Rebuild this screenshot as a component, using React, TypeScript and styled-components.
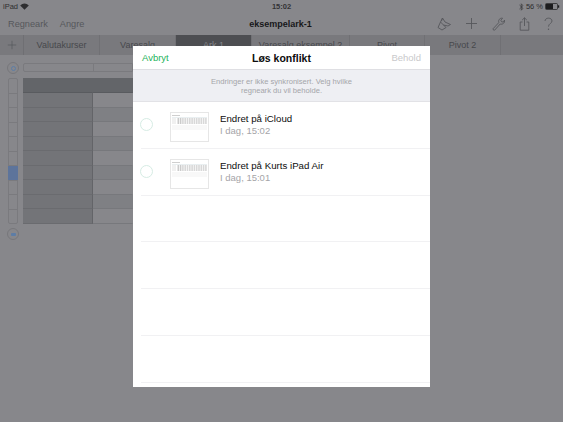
import React from "react";
import styled, { createGlobalStyle } from "styled-components";

const Global = createGlobalStyle`
  html, body { margin: 0; padding: 0; background: #87878b; }
  body { font-family: "Liberation Sans", Arial, sans-serif; }
`;

const Page = styled.div`
  position: relative;
  width: 563px;
  height: 422px;
  overflow: hidden;
  background: #87878b;
`;

const StatusBar = styled.div`
  height: 13px;
  padding: 0 3px;
  display: grid;
  grid-template-columns: 1fr auto 1fr;
  align-items: center;
  font-size: 7.5px;
  color: #2e2e30;
`;
const StatusSide = styled.div<{ $end?: boolean }>`
  display: flex;
  align-items: center;
  gap: 2px;
  justify-content: ${(p) => (p.$end ? "flex-end" : "flex-start")};
`;
const Clock = styled.span`
  font-weight: 700;
  color: #333336;
`;
const Toolbar = styled.div`
  height: 22px;
  padding: 0 10px 0 8px;
  display: grid;
  grid-template-columns: 1fr auto 1fr;
  align-items: center;
`;
const ToolLeft = styled.div`
  display: flex;
  gap: 12px;
`;
const ToolLabel = styled.span`
  font-size: 9.2px;
  color: #56575b;
`;
const DocTitle = styled.span`
  font-size: 9px;
  font-weight: 700;
  color: #17171a;
`;
const ToolIcons = styled.div`
  display: flex;
  justify-content: flex-end;
  gap: 14px;
`;
const TabBar = styled.div`
  height: 20px;
  display: flex;
  background: #79797d;
`;
const AddTab = styled.div`
  width: 24px;
  flex: none;
  display: flex;
  align-items: center;
  justify-content: center;
  border-right: 1px solid #6f6f73;
  box-sizing: border-box;
`;
const Tab = styled.div<{ $w: number; $active?: boolean }>`
  width: ${(p) => p.$w}px;
  flex: none;
  box-sizing: border-box;
  border-right: 1px solid #707074;
  display: flex;
  align-items: center;
  justify-content: center;
  font-size: 9px;
  color: ${(p) => (p.$active ? "#85868a" : "#47484c")};
  background: ${(p) => (p.$active ? "#4d4e52" : "transparent")};
`;

const Sheet = styled.div`
  padding: 7px 0 0 7px;
  display: grid;
  grid-template-columns: 12px 110px;
  column-gap: 4px;
  row-gap: 4px;
`;
const Knob = styled.div`
  width: 12px;
  height: 12px;
  border-radius: 50%;
  border: 1px solid #77777b;
  box-sizing: border-box;
  display: flex;
  align-items: center;
  justify-content: center;
`;
const KnobDot = styled.div<{ $square?: boolean }>`
  width: 5px;
  height: ${(p) => (p.$square ? 3 : 5)}px;
  box-sizing: border-box;
  border-radius: ${(p) => (p.$square ? "1px" : "50%")};
  background: ${(p) => (p.$square ? "#5d7da6" : "transparent")};
  border: ${(p) => (p.$square ? "none" : "1.5px solid #5d7da6")};
`;
const ColHeader = styled.div`
  height: 9px;
  margin-top: 1px;
  box-sizing: border-box;
  border: 1px solid #7a7a7e;
  border-radius: 2px 0 0 2px;
  display: grid;
  grid-template-columns: 70px 1fr;
`;
const ColCell = styled.div`
  border-right: 1px solid #7a7a7e;
`;
const RowRail = styled.div`
  width: 10px;
  margin-left: 1px;
  display: flex;
  flex-direction: column;
  border: 1px solid #7a7a7e;
  border-radius: 2px;
  box-sizing: border-box;
  height: 146px;
`;
const RailCell = styled.div<{ $sel?: boolean }>`
  flex: 1;
  margin: 0 -1px;
  border-bottom: 1px solid #7a7a7e;
  background: ${(p) => (p.$sel ? "#5d749b" : "transparent")};
  &:last-child { border-bottom: none; }
`;
const Grid = styled.div`
  height: 146px;
  display: grid;
  grid-template-columns: 70px 40px;
  grid-template-rows: 15px repeat(9, 1fr);
`;
const Cell = styled.div<{ $kind: "head" | "first" | "a" | "b" }>`
  box-sizing: border-box;
  border-bottom: 1px solid ${(p) => (p.$kind === "head" ? "#595b5f" : p.$kind === "first" ? "#6a6b6f" : "#77787c")};
  border-right: 1px solid ${(p) => (p.$kind === "first" ? "#636468" : "transparent")};
  background: ${(p) =>
    p.$kind === "head" ? "#636569" : p.$kind === "first" ? "#737478" : p.$kind === "a" ? "#87878b" : "#7f8084"};
`;
const BottomKnobRow = styled.div`
  grid-column: 1;
`;

const Modal = styled.div`
  position: absolute;
  left: 133px;
  top: 46px;
  width: 297px;
  height: 341px;
  background: #fff;
  display: flex;
  flex-direction: column;
`;
const ModalHead = styled.div`
  height: 24px;
  flex: none;
  padding: 0 9px;
  display: grid;
  grid-template-columns: 1fr auto 1fr;
  align-items: center;
  border-bottom: 1px solid #dfdfe3;
  box-sizing: border-box;
`;
const Cancel = styled.span`
  font-size: 9.5px;
  color: #1fb45c;
`;
const ModalTitle = styled.span`
  font-size: 10.5px;
  font-weight: 700;
  color: #0c0c0c;
`;
const Keep = styled.span`
  font-size: 9.5px;
  color: #c9c9cb;
  text-align: right;
`;
const Info = styled.div`
  height: 32px;
  flex: none;
  box-sizing: border-box;
  background: #eeeff3;
  border-bottom: 1px solid #e2e2e6;
  display: flex;
  align-items: center;
  justify-content: center;
  text-align: center;
  font-size: 7.6px;
  line-height: 9px;
  color: #a4a5a9;
`;
const List = styled.div`
  padding-left: 8px;
  display: flex;
  flex-direction: column;
`;
const Row = styled.div`
  height: 46.8px;
  box-sizing: border-box;
  flex: none;
  padding-bottom: 1px;
  border-bottom: 1px solid #f1f1f3;
  display: flex;
  align-items: center;
`;
const Radio = styled.div`
  width: 13px;
  height: 13px;
  margin-left: -1px;
  flex: none;
  box-sizing: border-box;
  border-radius: 50%;
  border: 1px solid #d6ece4;
`;
const Thumb = styled.svg`
  margin: 5px 0 0 17px;
  flex: none;
  display: block;
`;
const RowText = styled.div`
  margin-left: 11px;
  display: flex;
  flex-direction: column;
  gap: 0;
`;
const RowTitle = styled.span`
  font-size: 9.7px;
  line-height: 12px;
  color: #0d0d0d;
`;
const RowSub = styled.span`
  font-size: 9.5px;
  line-height: 11px;
  color: #a5a5a8;
`;

const ic = { fill: "none", stroke: "#56575b", strokeWidth: 0.9 };

const Wifi = () => (
  <svg width="9" height="7" viewBox="0 0 9 7">
    <path d="M4.5 6.8 L0.2 2.4 A6 6 0 0 1 8.8 2.4Z" fill="#2e2e30" />
  </svg>
);
const Bluetooth = () => (
  <svg width="5" height="8" viewBox="0 0 5 8">
    <path d="M0.5 2 L4 5.4 L2.3 7.2 V0.8 L4 2.6 L0.5 6" fill="none" stroke="#38383b" strokeWidth="0.7" />
  </svg>
);
const Battery = () => (
  <svg width="15" height="7" viewBox="0 0 15 7">
    <rect x="0.5" y="0.5" width="12" height="6" rx="1" fill="none" stroke="#1c1c1e" strokeWidth="0.7" />
    <rect x="1" y="1" width="7" height="5" fill="#1c1c1e" />
    <rect x="13" y="2.3" width="1.2" height="2.4" fill="#1c1c1e" />
  </svg>
);
const PlusIcon = ({ size = 13 }: { size?: number }) => (
  <svg width={size} height={size} viewBox="0 0 13 13">
    <path d="M6.5 1V12M1 6.5H12" {...ic} />
  </svg>
);
const Brush = () => (
  <svg width="14" height="14" viewBox="0 0 14 14">
    <path d="M5.5 1 L8 5 L13.5 7.5 L11 9 L6.5 8 L9 10.5 L5 13 L1 10.5 L3.5 5 Z" {...ic} />
    <path d="M3.5 5 L6.5 8 M5.5 1 L4.5 4" {...ic} />
  </svg>
);
const Wrench = () => (
  <svg width="13" height="14" viewBox="0 0 13 14">
    <path d="M1 11.8 L6.8 5.6 C6 3 7.8 0.8 10.6 1.2 L8.8 3.2 L9.6 4.8 L11.4 5 L12.6 3 C13 6 10.6 7.8 8.2 7 L2.6 13.2 Q1 13.4 1 11.8Z" {...ic} />
  </svg>
);
const Share = () => (
  <svg width="11" height="14" viewBox="0 0 11 14">
    <path d="M3.5 5H1.2V13.2H9.8V5H7.5M5.5 9V0.8M3.2 3L5.5 0.8L7.8 3" {...ic} />
  </svg>
);
const Help = () => (
  <svg width="9" height="14" viewBox="0 0 9 14">
    <path d="M1 4 C1 0.2 8 0.2 8 4 C8 6.5 4.5 6.5 4.5 9.6" {...ic} />
    <circle cx="4.5" cy="12.3" r="0.7" fill="#56575b" />
  </svg>
);

const Thumbnail = () => (
  <Thumb width="39" height="30" viewBox="0 0 39 30">
    <rect x="0.5" y="0.5" width="38" height="29" fill="#fff" stroke="#e6e6e6" />
    <rect x="2" y="3" width="8" height="1" fill="#cfcfcf" />
    <rect x="2" y="5" width="35" height="0.8" fill="#e4ecee" />
    {[0, 1, 2, 3, 4, 5, 6, 7, 8, 9, 10, 11, 12].map((i) => (
      <rect key={i} x={7.5 + i * 2.3} y="6" width="1.6" height="6" fill={i < 2 ? "#cbcbcb" : "#d8d8d8"} />
    ))}
    <rect x="2" y="6" width="4" height="6" fill="#f0f0f0" />
    <rect x="2" y="13" width="35" height="5" fill="#f8f8f8" />
  </Thumb>
);

const tabs = [
  { t: "Valutakurser", w: 76 },
  { t: "Varesalg", w: 76 },
  { t: "Ark 1", w: 76, active: true },
  { t: "Varesalg eksempel 2", w: 98 },
  { t: "Pivot", w: 75 },
  { t: "Pivot 2", w: 76 },
];
const rows = [0, 1, 2, 3, 4, 5, 6, 7, 8];

export default function App() {
  return (
    <Page>
      <Global />
      <StatusBar>
        <StatusSide>
          iPad <Wifi />
        </StatusSide>
        <Clock>15:02</Clock>
        <StatusSide $end>
          <Bluetooth />
          <span>56 %</span>
          <Battery />
        </StatusSide>
      </StatusBar>
      <Toolbar>
        <ToolLeft>
          <ToolLabel>Regneark</ToolLabel>
          <ToolLabel>Angre</ToolLabel>
        </ToolLeft>
        <DocTitle>eksempelark-1</DocTitle>
        <ToolIcons>
          <Brush />
          <PlusIcon />
          <Wrench />
          <Share />
          <Help />
        </ToolIcons>
      </Toolbar>
      <TabBar>
        <AddTab>
          <PlusIcon size={10} />
        </AddTab>
        {tabs.map((x) => (
          <Tab key={x.t} $w={x.w} $active={x.active}>
            {x.t}
          </Tab>
        ))}
      </TabBar>
      <Sheet>
        <Knob>
          <KnobDot />
        </Knob>
        <ColHeader>
          <ColCell />
        </ColHeader>
        <RowRail>
          {[0, 1, 2, 3, 4, 5, 6, 7, 8, 9].map((i) => (
            <RailCell key={i} $sel={i === 6} />
          ))}
        </RowRail>
        <Grid>
          <Cell $kind="head" />
          <Cell $kind="head" />
          {rows.map((i) => (
            <React.Fragment key={i}>
              <Cell $kind="first" />
              <Cell $kind={i % 2 ? "b" : "a"} />
            </React.Fragment>
          ))}
        </Grid>
        <BottomKnobRow>
          <Knob>
            <KnobDot $square />
          </Knob>
        </BottomKnobRow>
      </Sheet>
      <Modal>
        <ModalHead>
          <Cancel>Avbryt</Cancel>
          <ModalTitle>Løs konflikt</ModalTitle>
          <Keep>Behold</Keep>
        </ModalHead>
        <Info>
          Endringer er ikke synkronisert. Velg hvilke
          <br />
          regneark du vil beholde.
        </Info>
        <List>
          <Row>
            <Radio />
            <Thumbnail />
            <RowText>
              <RowTitle>Endret på iCloud</RowTitle>
              <RowSub>I dag, 15:02</RowSub>
            </RowText>
          </Row>
          <Row>
            <Radio />
            <Thumbnail />
            <RowText>
              <RowTitle>Endret på Kurts iPad Air</RowTitle>
              <RowSub>I dag, 15:01</RowSub>
            </RowText>
          </Row>
          <Row />
          <Row />
          <Row />
          <Row />
        </List>
      </Modal>
    </Page>
  );
}
